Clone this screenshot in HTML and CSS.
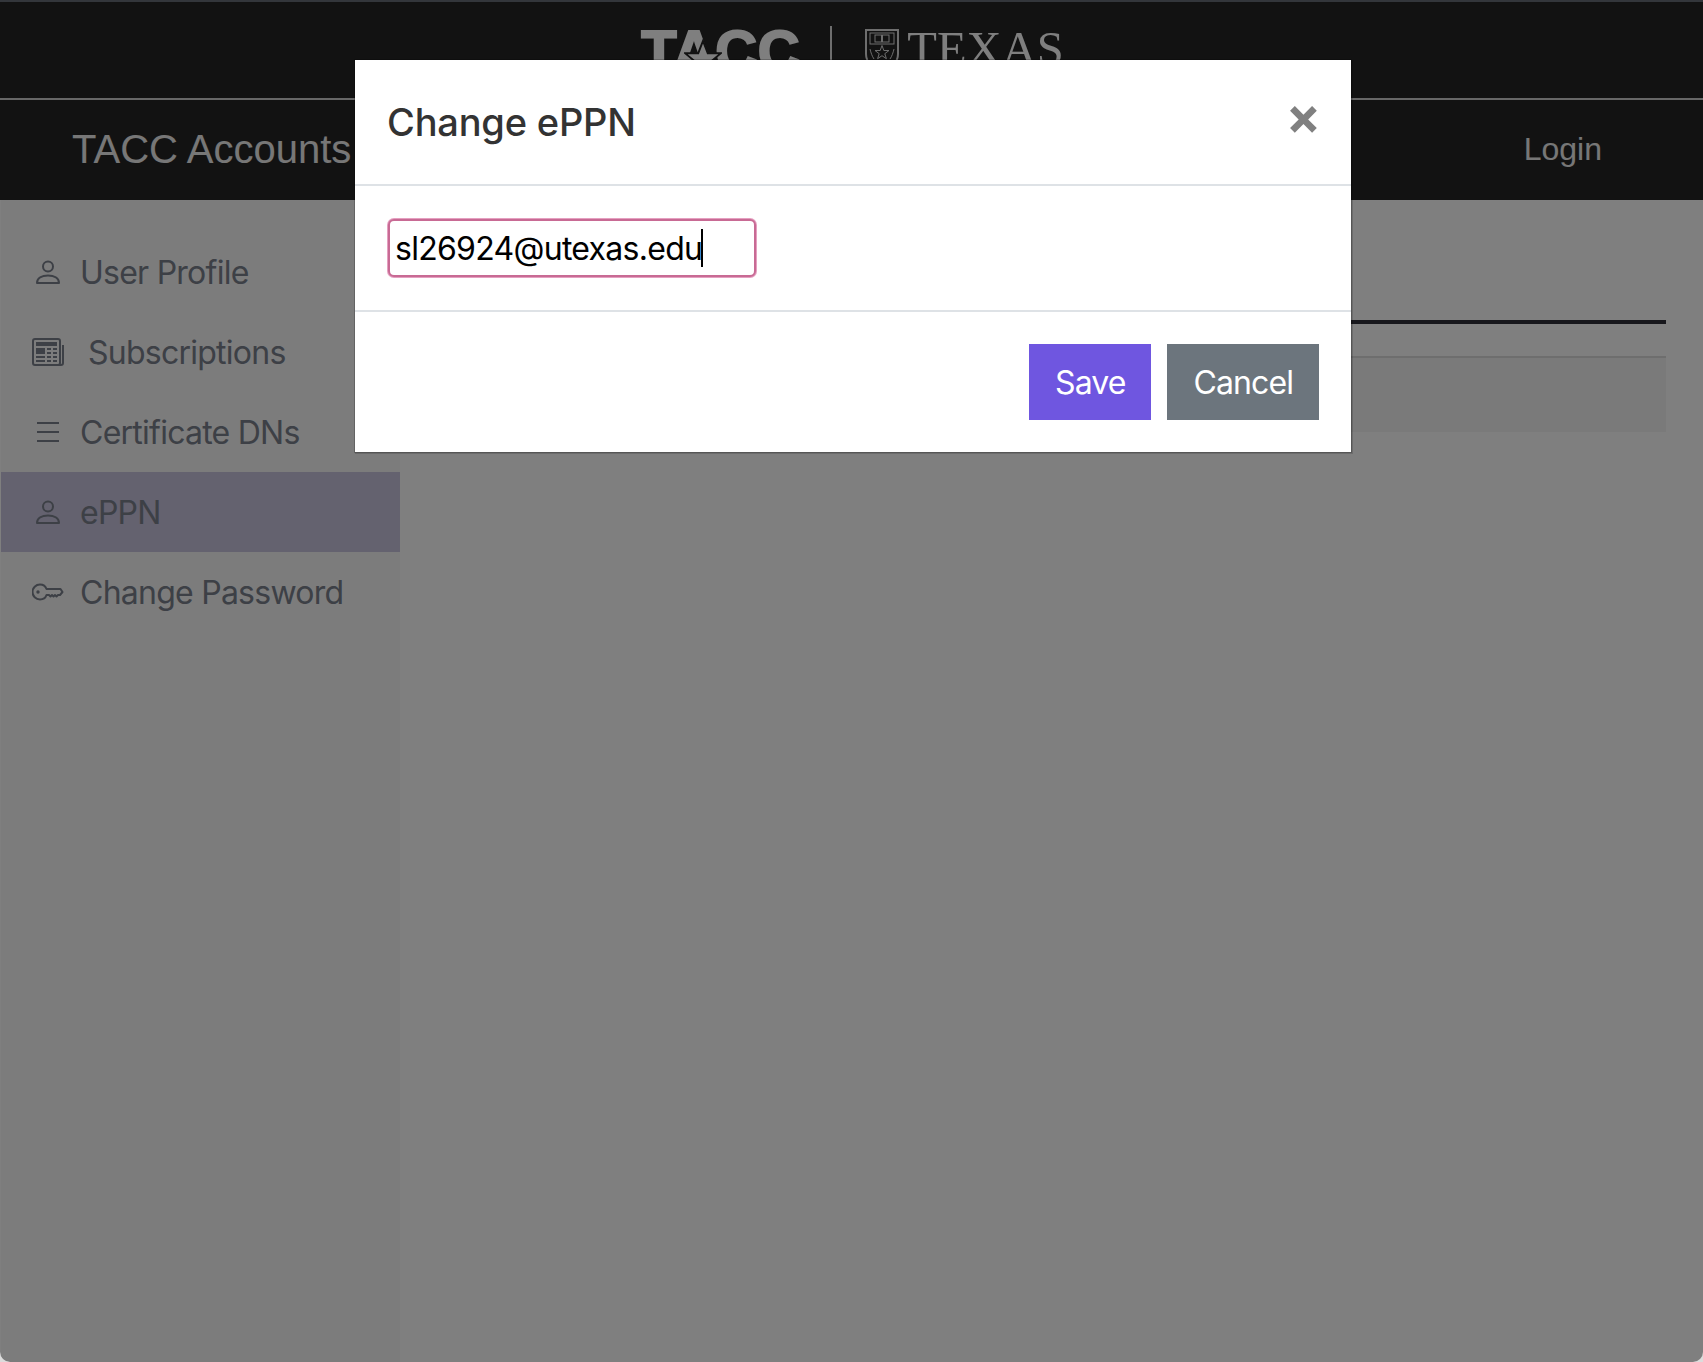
FILE: index.html
```html
<!DOCTYPE html>
<html lang="en">
<head>
<meta charset="utf-8">
<title>TACC Accounts</title>
<link rel="stylesheet" href="styles.css">
</head>
<body>
<div class="window">
  <header class="brandbar">
    <div class="logo-tacc">TACC
      <svg class="logo-star" viewBox="0 0 40 38"><path d="M20 2l5 13h14l-11 9 4 13-12-8-12 8 4-13L1 15h14z"/></svg>
    </div>
    <span class="logo-rule"></span>
    <svg class="logo-shield" viewBox="0 0 34 44">
      <path class="shield-edge" d="M1 1h32v24c0 10-8 14-16 18C9 39 1 35 1 25z"/>
      <rect class="shield-line" x="5" y="4" width="24" height="11"/>
      <rect class="shield-line" x="10" y="6" width="6.5" height="7"/>
      <rect class="shield-line" x="17.5" y="6" width="6.5" height="7"/>
      <path class="shield-line" d="M17 16.500l1.800 5h5.200l-4.200 3.200 1.600 5-4.400-3-4.400 3 1.600-5-4.200-3.200h5.200z"/>
      <path class="shield-line" d="M5 20c1 4 2 7 4 10M29 20c-1 4-2 7-4 10"/>
    </svg>
    <div class="logo-texas">TEXAS</div>
  </header>
  <nav class="navbar">
    <a class="nav-title">TACC Accounts</a>
    <a class="nav-login">Login</a>
  </nav>
  <div class="content">
    <aside class="sidebar">
      <a class="side-item">
        <svg class="icon icon-person" viewBox="0 0 24 24"><circle cx="12" cy="6.500" r="5"/><path d="M1 23c0-5 5-7.500 11-7.500s11 2.500 11 7.500z"/></svg>
        <span>User Profile</span>
      </a>
      <a class="side-item">
        <svg class="icon icon-news" viewBox="0 0 32 28">
          <rect x="1" y="1" width="27" height="26" rx="2"/>
          <path d="M31 7v18a2 2 0 0 1-2 2h-3"/>
          <path class="news-fill" d="M4 4h21v4H4zM4 10h9v6H4z"/>
          <path d="M15 11h4M21 11h4M15 15h4M21 15h4M4 19h9M15 19h4M21 19h4M4 23h9M15 23h4M21 23h4"/>
        </svg>
        <span>Subscriptions</span>
      </a>
      <a class="side-item">
        <svg class="icon icon-list" viewBox="0 0 22 20"><path d="M0 1h22M0 10h22M0 19h22"/></svg>
        <span>Certificate DNs</span>
      </a>
      <a class="side-item is-active">
        <svg class="icon icon-person" viewBox="0 0 24 24"><circle cx="12" cy="6.500" r="5"/><path d="M1 23c0-5 5-7.500 11-7.500s11 2.500 11 7.500z"/></svg>
        <span>ePPN</span>
      </a>
      <a class="side-item">
        <svg class="icon icon-key" viewBox="0 0 32 18">
          <path d="M14.500 6C13.500 3 11 1.500 8 1.500a7.500 7.500 0 0 0 0 15c3 0 5.500-1.500 6.500-4.500h2.500l1.500 1.500 1.500-1.500 1.500 1.500 1.500-1.500 1.500 1.500 1.500-1.500h2l2.500-3-2-3z"/>
          <circle class="key-dot" cx="6" cy="9" r="1.700"/>
        </svg>
        <span>Change Password</span>
      </a>
    </aside>
    <main class="main">
      <div class="tab-rule"></div>
      <div class="panel"></div>
    </main>
  </div>
  <div class="backdrop"></div>
  <div class="modal-layer">
    <div class="modal" role="dialog" aria-label="Change ePPN">
      <div class="modal-header">
        <h2 class="modal-title">Change ePPN</h2>
        <button class="modal-close" type="button">×</button>
      </div>
      <div class="modal-body">
        <div class="field">
          <input class="field-input" type="text" value="sl26924@utexas.edu">
          <span class="field-caret"></span>
        </div>
      </div>
      <div class="modal-footer">
        <button class="btn btn-save" type="button">Save</button>
        <button class="btn btn-cancel" type="button">Cancel</button>
      </div>
    </div>
  </div>
</div>
</body>
</html>
```
FILE: styles.css
```css
* { box-sizing: border-box; }
html, body { margin: 0; padding: 0; background: #dcdcdc; }
body { font-family: Inter, "Liberation Sans", sans-serif; }

.window {
  position: relative;
  width: 1703px;
  height: 1362px;
  overflow: hidden;
  background: #fff;
  border-radius: 0 0 10px 10px;
  display: flex;
  flex-direction: column;
}

.brandbar {
  height: 100px;
  flex: none;
  background: #242424;
  border-top: 2px solid #666c76;
  border-bottom: 2px solid #cfcfcf;
  display: flex;
  align-items: flex-start;
  justify-content: center;
  padding-top: 24px;
}
.logo-tacc {
  position: relative;
  width: 158px;
  margin-top: -4px;
  margin-left: 2px;
  font: 700 58px/58px "Liberation Sans", sans-serif;
  color: #fff;
  -webkit-text-stroke: 2px #fff;
  letter-spacing: 0.5px;
  white-space: nowrap;
}
.logo-star {
  position: absolute;
  left: 43px;
  top: 17px;
  width: 38px;
  height: 36px;
  fill: #fff;
  stroke: #242424;
  stroke-width: 2;
}
.logo-rule { width: 2px; height: 60px; background: #ddd; margin: 0 33px 0 31px; }
.logo-shield {
  width: 34px;
  height: 44px;
  margin-top: 3px;
  fill: none;
  stroke: #ddd;
  stroke-width: 1;
}
.shield-edge { stroke-width: 2; }
.logo-texas {
  margin-left: 8px;
  font: 400 48.500px/46px "Liberation Serif", serif;
  color: #fff;
}

.navbar {
  height: 100px;
  flex: none;
  background: #242424;
  display: flex;
  align-items: center;
  justify-content: space-between;
  padding: 0 101px 2px 72px;
  font-family: "Liberation Sans", sans-serif;
  color: #eee;
}
.nav-title { font-size: 40px; line-height: 1; }
.nav-login { font-size: 32px; line-height: 1; }

.content { flex: 1; display: flex; min-height: 0; }

.sidebar {
  width: 400px;
  flex: none;
  background: #f8f8f8;
  border-left: 1px solid #fff;
  padding-top: 32px;
}
.side-item {
  height: 80px;
  display: flex;
  align-items: center;
  padding-left: 35px;
  gap: 20px;
  font-size: 32px;
  letter-spacing: -0.75px;
  color: #7a808c;
}
.side-item.is-active { background: #c8c4de; }

.icon { flex: none; fill: none; stroke: #7a808c; stroke-width: 2; stroke-linejoin: round; display: block; }
.icon-person { width: 24px; height: 24px; }
.icon-news { width: 32px; height: 28px; margin-left: -4px; margin-right: 4px; }
.news-fill { fill: #7a808c; stroke: none; }
.icon-list { width: 22px; height: 20px; margin-left: 1px; margin-right: 1px; }
.icon-key { width: 32px; height: 18px; margin-left: -4px; margin-right: -4px; }
.key-dot { fill: #7a808c; stroke: none; }

.main { flex: 1; padding: 120px 37px 0 40px; }
.tab-rule { height: 4px; background: #2e2e38; }
.panel {
  margin-top: 32px;
  height: 76px;
  background: #f4f4f4;
  border-top: 2px solid #dcdcdc;
}

.backdrop { position: absolute; inset: 0; background: rgba(0, 0, 0, .5); }

.modal-layer {
  position: absolute;
  inset: 0;
  display: flex;
  justify-content: center;
  align-items: flex-start;
  padding: 59px 0 0 3px;
}
.modal {
  width: 998px;
  background: #fff;
  border: 1px solid rgba(0, 0, 0, .2);
  background-clip: padding-box;
  box-shadow: 1px 1px 0 rgba(0, 0, 0, .15);
}
.modal-header {
  height: 126px;
  border-bottom: 2px solid #dee2e6;
  display: flex;
  align-items: center;
  justify-content: space-between;
  padding: 2px 32px 0;
}
.modal-title {
  margin: 0;
  font-size: 38px;
  font-weight: 500;
  line-height: 1.2;
  letter-spacing: -0.2px;
  color: #333;
}
.modal-close {
  border: 0;
  padding: 0;
  background: none;
  font: 700 52px/1 Inter, sans-serif;
  color: #808080;
  margin: -14px -2px 0 0;
}
.modal-body {
  height: 126px;
  padding: 33px 32px 0 33px;
  border-bottom: 2px solid #dee2e6;
}
.field { position: relative; width: 368px; }
.field-input {
  display: block;
  width: 100%;
  height: 58px;
  border: 2px solid #c86a94;
  border-radius: 6px;
  box-shadow: 0 0 0 1px #e59fc0;
  padding: 0 5px;
  font: 400 32px/1 Inter, sans-serif;
  letter-spacing: -0.72px;
  color: #000;
  outline: none;
  caret-color: transparent;
}
.field-caret {
  position: absolute;
  left: 313px;
  top: 10px;
  width: 2px;
  height: 38px;
  background: #000;
}
.modal-footer {
  display: flex;
  justify-content: flex-end;
  gap: 16px;
  padding: 32px;
}
.btn {
  height: 76px;
  border: 0;
  padding: 2px 26px 0;
  font: 400 32px/1 Inter, sans-serif;
  letter-spacing: -0.9px;
  color: #fff;
}
.btn-save { background: #6f56e0; }
.btn-cancel { background: #6c757d; }
```
